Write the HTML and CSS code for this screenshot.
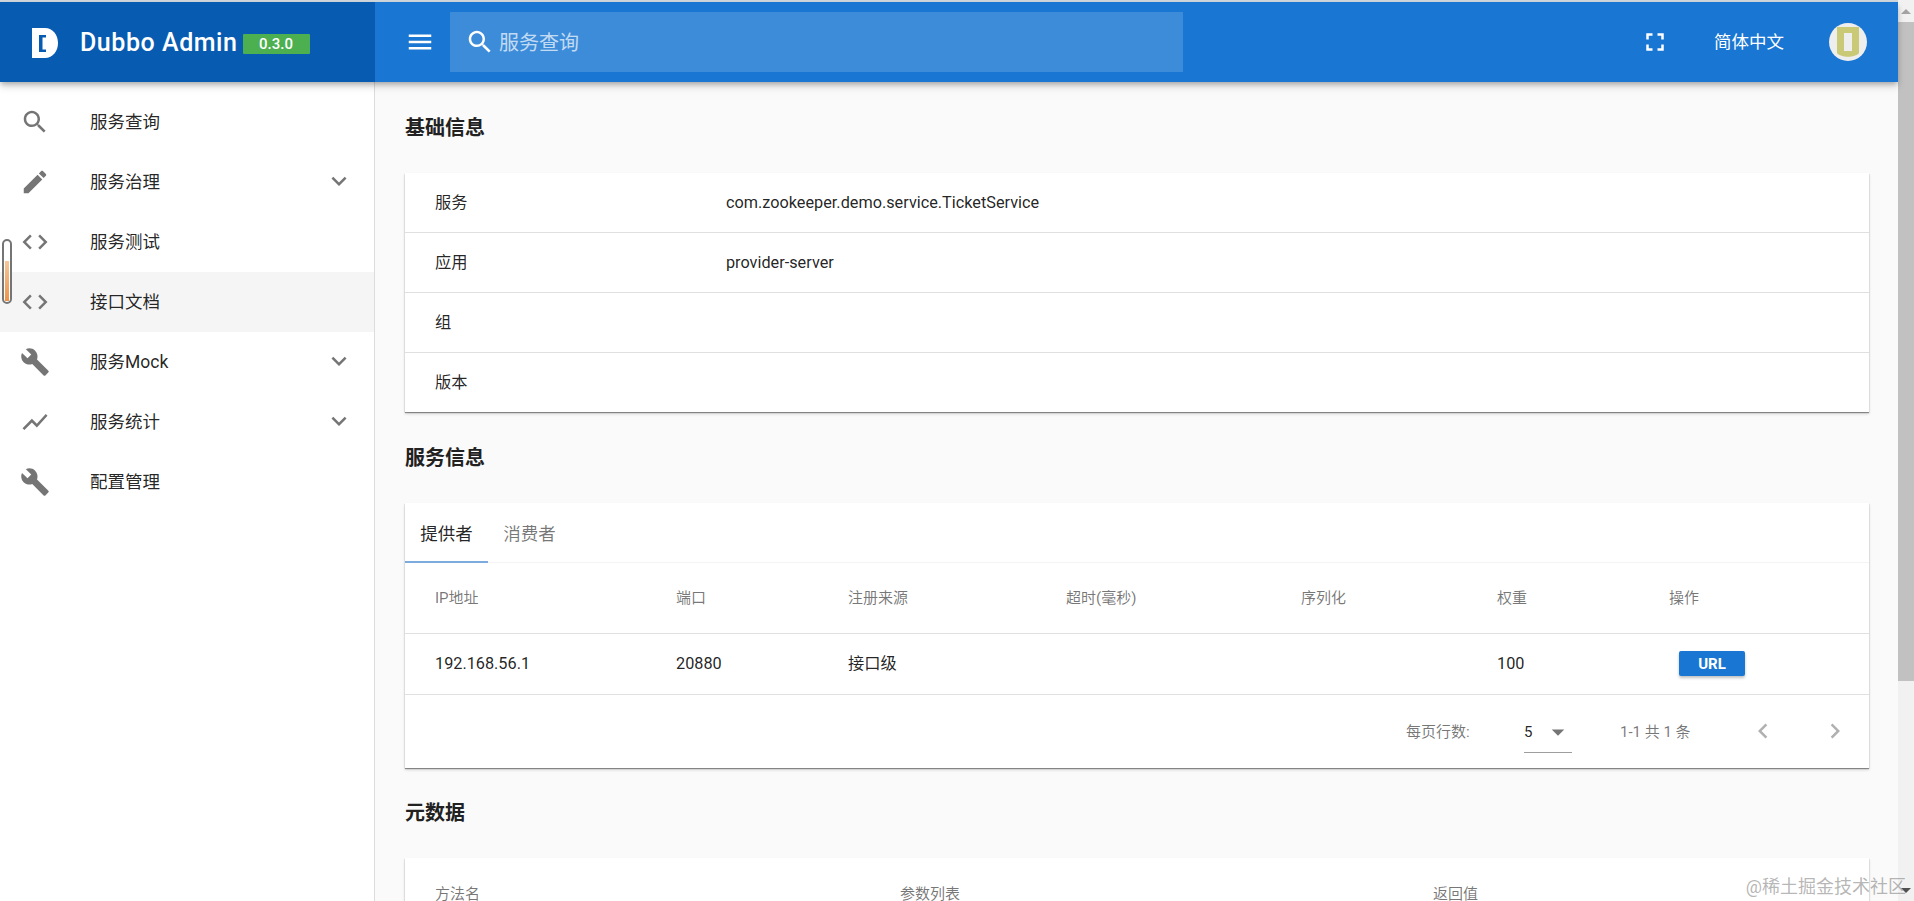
FILE: index.html
```html
<!DOCTYPE html>
<html lang="zh-CN">
<head>
<meta charset="utf-8">
<title>Dubbo Admin</title>
<link rel="stylesheet" href="styles.css">
</head>
<body>
<svg class="defs" width="0" height="0" aria-hidden="true">
  <symbol id="i-search" viewBox="0 0 24 24"><path d="M15.5 14h-.79l-.28-.27C15.41 12.59 16 11.11 16 9.5 16 5.91 13.09 3 9.5 3S3 5.91 3 9.5 5.91 16 9.5 16c1.61 0 3.09-.59 4.23-1.57l.27.28v.79l5 4.99L20.49 19l-4.99-5zm-6 0C7.01 14 5 11.99 5 9.5S7.01 5 9.5 5 14 7.01 14 9.5 11.99 14 9.5 14z"/></symbol>
  <symbol id="i-edit" viewBox="0 0 24 24"><path d="M3 17.25V21h3.75L17.81 9.94l-3.75-3.75L3 17.25zM20.71 7.04c.39-.39.39-1.02 0-1.41l-2.34-2.34c-.39-.39-1.02-.39-1.41 0l-1.83 1.83 3.75 3.75 1.83-1.83z"/></symbol>
  <symbol id="i-code" viewBox="0 0 24 24"><path d="M9.4 16.6L4.8 12l4.6-4.6L8 6l-6 6 6 6 1.4-1.4zm5.2 0l4.6-4.6-4.6-4.6L16 6l6 6-6 6-1.4-1.4z"/></symbol>
  <symbol id="i-build" viewBox="0 0 24 24"><path d="M22.7 19l-9.1-9.1c.9-2.3.4-5-1.5-6.9-2-2-5-2.4-7.4-1.3L9 6 6 9 1.6 4.7C.4 7.1.9 10.1 2.9 12.1c1.9 1.9 4.6 2.4 6.9 1.5l9.1 9.1c.4.4 1 .4 1.4 0l2.3-2.3c.5-.4.5-1.1.1-1.4z"/></symbol>
  <symbol id="i-chart" viewBox="0 0 24 24"><path d="M3.5 18.49l6-6.01 4 4L22 6.92l-1.41-1.41-7.09 7.97-4-4L2 16.99z"/></symbol>
  <symbol id="i-more" viewBox="0 0 24 24"><path d="M16.59 8.59L12 13.17 7.41 8.59 6 10l6 6 6-6z"/></symbol>
  <symbol id="i-menu" viewBox="0 0 24 24"><path d="M3 18h18v-2H3v2zm0-5h18v-2H3v2zm0-7v2h18V6H3z"/></symbol>
  <symbol id="i-full" viewBox="0 0 24 24"><path d="M7 14H5v5h5v-2H7v-3zm-2-4h2V7h3V5H5v5zm12 7h-3v2h5v-5h-2v3zM14 5v2h3v3h2V5h-5z"/></symbol>
  <symbol id="i-left" viewBox="0 0 24 24"><path d="M15.41 7.41L14 6l-6 6 6 6 1.41-1.41L10.83 12z"/></symbol>
  <symbol id="i-right" viewBox="0 0 24 24"><path d="M10 6L8.59 7.41 13.17 12l-4.58 4.59L10 18l6-6z"/></symbol>
  <symbol id="i-drop" viewBox="0 0 24 24"><path d="M7 10l5 5 5-5z"/></symbol>
</svg>

<div class="window">
  <div class="app">
    <header class="topbar">
      <div class="brand">
        <svg class="logo" viewBox="0 0 26 30"><path fill-rule="evenodd" d="M0 0H13C21 0 26 7 26 15S21 30 13 30H0ZM7 7V24H14V21.500H10.500V9.500H14V7Z"/></svg>
        <span class="brand-name">Dubbo Admin</span>
        <span class="badge">0.3.0</span>
      </div>
      <div class="bar">
        <svg class="ico ico-menu"><use href="#i-menu"/></svg>
        <div class="search">
          <svg class="ico ico-search"><use href="#i-search"/></svg>
          <span class="search-text">服务查询</span>
        </div>
        <div class="bar-right">
          <svg class="ico ico-full"><use href="#i-full"/></svg>
          <span class="lang">简体中文</span>
          <svg class="avatar" viewBox="0 0 38 38">
            <circle class="av-bg" cx="19" cy="19" r="19"/>
            <path class="av-fg" d="M8 4H30V30C26 35 12 35 8 30ZM15 10V28H23V10Z"/>
          </svg>
        </div>
      </div>
    </header>

    <div class="body">
      <nav class="side">
        <a class="item"><svg class="ico nav-ico"><use href="#i-search"/></svg><span class="label">服务查询</span></a>
        <a class="item"><svg class="ico nav-ico"><use href="#i-edit"/></svg><span class="label">服务治理</span><svg class="ico chev"><use href="#i-more"/></svg></a>
        <a class="item"><svg class="ico nav-ico"><use href="#i-code"/></svg><span class="label">服务测试</span></a>
        <a class="item active"><svg class="ico nav-ico"><use href="#i-code"/></svg><span class="label">接口文档</span></a>
        <a class="item"><svg class="ico nav-ico"><use href="#i-build"/></svg><span class="label">服务Mock</span><svg class="ico chev"><use href="#i-more"/></svg></a>
        <a class="item"><svg class="ico nav-ico"><use href="#i-chart"/></svg><span class="label">服务统计</span><svg class="ico chev"><use href="#i-more"/></svg></a>
        <a class="item"><svg class="ico nav-ico"><use href="#i-build"/></svg><span class="label">配置管理</span></a>
      </nav>

      <main class="main">
        <h2 class="heading">基础信息</h2>
        <section class="card info">
          <div class="info-row"><span class="info-key">服务</span><span>com.zookeeper.demo.service.TicketService</span></div>
          <div class="info-row"><span class="info-key">应用</span><span>provider-server</span></div>
          <div class="info-row"><span class="info-key">组</span></div>
          <div class="info-row"><span class="info-key">版本</span></div>
        </section>

        <h2 class="heading">服务信息</h2>
        <section class="card">
          <div class="tabs">
            <span class="tab on">提供者</span>
            <span class="tab">消费者</span>
          </div>
          <table class="grid">
            <colgroup><col class="c1"><col class="c2"><col class="c3"><col class="c4"><col class="c5"><col class="c6"><col class="c7"></colgroup>
            <thead>
              <tr><th>IP地址</th><th>端口</th><th>注册来源</th><th>超时(毫秒)</th><th>序列化</th><th>权重</th><th>操作</th></tr>
            </thead>
            <tbody>
              <tr><td>192.168.56.1</td><td>20880</td><td class="td-cjk">接口级</td><td></td><td></td><td>100</td><td><button class="url">URL</button></td></tr>
            </tbody>
          </table>
          <div class="pager">
            <span class="pg-label">每页行数:</span>
            <span class="pg-select"><span>5</span><svg class="ico pg-drop"><use href="#i-drop"/></svg></span>
            <span class="pg-range">1-1 共 1 条</span>
            <svg class="ico pg-nav"><use href="#i-left"/></svg>
            <svg class="ico pg-nav pg-next"><use href="#i-right"/></svg>
          </div>
        </section>

        <h2 class="heading heading-last">元数据</h2>
        <section class="card meta">
          <div class="meta-head"><span class="m1">方法名</span><span class="m2">参数列表</span><span>返回值</span></div>
        </section>
      </main>
    </div>
  </div>

  <div class="scrollbar">
    <span class="sb-btn"><span class="tri-up"></span></span>
    <span class="sb-thumb"></span>
    <span class="sb-btn"><span class="tri-down"></span></span>
  </div>

  <div class="clip"><span class="clip-fill"></span></div>
  <div class="watermark">@稀土掘金技术社区</div>
</div>
</body>
</html>
```

FILE: styles.css
```css
* { box-sizing: border-box; }
html, body { margin: 0; height: 100%; overflow: hidden; }
body {
  font-family: Roboto, "Noto Sans CJK SC", sans-serif;
  font-size: 16.25px;
  color: rgba(0, 0, 0, .87);
  background: #fafafa;
}
.defs { position: absolute; }
.ico { width: 30px; height: 30px; fill: currentColor; flex: none; display: block; }

.window { position: relative; display: flex; height: 901px; }
.app { flex: 1; min-width: 0; display: flex; flex-direction: column; border-top: 2px solid #cfd6dc; }

/* Top bar */
.topbar { height: 80px; flex: none; display: flex; color: #fff; background: #1976d2; box-shadow: 0 3px 5px -1px rgba(0,0,0,.25), 0 5px 8px rgba(0,0,0,.12); position: relative; z-index: 2; }
.brand { width: 375px; flex: none; display: flex; align-items: center; background: #075cb2; padding-left: 32px; }
.logo { width: 26px; height: 30px; fill: #fff; flex: none; margin-top: 1px; }
.brand-name { margin-left: 22px; font-size: 25px; font-weight: 500; letter-spacing: .55px; white-space: nowrap; }
.badge { margin-left: 5px; margin-top: 3px; width: 67px; height: 20px; display: flex; align-items: center; justify-content: center; background: #4caf50; border-radius: 1px; font-size: 15px; font-weight: 500; }
.bar { flex: 1; display: flex; align-items: center; padding-left: 30px; }
.search { margin-left: 15px; width: 733px; height: 60px; display: flex; align-items: center; padding-left: 15px; background: rgba(255,255,255,.16); }
.search-text { margin-left: 4px; font-size: 20px; color: rgba(255,255,255,.7); padding-bottom: 1px; }
.bar-right { margin-left: auto; display: flex; align-items: center; padding-right: 31px; }
.lang { margin-left: 44px; font-size: 17.5px; padding-bottom: 4px; }
.avatar { margin-left: 45px; width: 38px; height: 38px; display: block; flex: none; }
.av-bg { fill: #eeeeee; }
.av-fg { fill: #c9c976; }

/* Layout */
.body { flex: 1; min-height: 0; display: flex; }
.side { width: 375px; flex: none; padding-top: 10px; background: #fff; border-right: 1px solid #dcdcdc; }
.item { height: 60px; display: flex; align-items: center; padding: 0 20px; color: rgba(0,0,0,.87); }
.item.active { background: #f5f5f5; }
.nav-ico { color: #757575; margin-right: 40px; margin-bottom: 1px; }
.label { font-size: 17.5px; padding-bottom: 4px; }
.chev { margin-left: auto; color: #757575; margin-bottom: 3px; }
.main { flex: 1; min-width: 0; padding: 0 29px 0 30px; overflow: hidden; }

.heading { margin: 0; height: 91px; display: flex; align-items: center; padding-bottom: 2px; font-size: 20px; font-weight: 700; color: #212121; }
.heading-last { height: 90px; }
.card { background: #fff; box-shadow: 0 1px 1px rgba(0,0,0,.4), 0 2px 3px rgba(0,0,0,.14); }

.info-row { height: 60px; display: flex; align-items: center; padding-left: 30px; border-bottom: 1px solid #e0e0e0; }
.info-row:last-child { border-bottom: 0; height: 59px; }
.info-key { width: 291px; flex: none; padding-bottom: 4px; }

.tabs { height: 60px; display: flex; border-bottom: 1px solid #f4f4f4; }
.tab { width: 83px; display: flex; align-items: center; justify-content: center; font-size: 17.5px; color: rgba(0,0,0,.54); }
.tab.on { color: rgba(0,0,0,.87); border-bottom: 2.5px solid #7eabde; margin-bottom: -1px; }

.grid { width: 100%; table-layout: fixed; border-collapse: collapse; }
.c1 { width: 241px; } .c2 { width: 172px; } .c3 { width: 218px; } .c4 { width: 235px; } .c5 { width: 196px; } .c6 { width: 172px; }
.grid th, .grid td { padding: 0 0 0 30px; text-align: left; border-bottom: 1px solid #e0e0e0; }
.grid th { height: 70px; padding-bottom: 3px; font-size: 15px; font-weight: 400; color: rgba(0,0,0,.54); }
.grid td { height: 61px; }
.grid .td-cjk { padding-bottom: 3px; }
.url { width: 66px; height: 25px; margin-left: 10px; padding: 0; border: 0; border-radius: 2px; background: #1976d2; color: #fff; font: 700 15px Roboto, sans-serif; box-shadow: 0 2px 3px rgba(0,0,0,.25); display: block; }

.pager { height: 73px; display: flex; align-items: center; padding-left: 1001px; font-size: 15px; color: rgba(0,0,0,.54); }
.pg-label { width: 118px; flex: none; padding-bottom: 2px; }
.pg-select { width: 48px; height: 40px; flex: none; display: flex; align-items: center; justify-content: space-between; border-bottom: 1px solid #9e9e9e; color: rgba(0,0,0,.87); margin-top: 3px; }
.pg-drop { color: #757575; margin-right: -1px; }
.pg-range { margin-left: 48px; width: 128px; flex: none; padding-bottom: 2px; }
.pg-nav { color: #b0b0b0; }
.pg-next { margin-left: 42px; }

.meta-head { height: 70px; display: flex; align-items: center; padding: 0 0 0 30px; font-size: 15px; color: rgba(0,0,0,.54); }
.m1 { width: 465px; flex: none; }
.m2 { width: 533px; flex: none; }

/* Scrollbar */
.scrollbar { width: 16px; flex: none; display: flex; flex-direction: column; background: #f1f1f1; }
.sb-btn { height: 22px; flex: none; display: flex; align-items: center; justify-content: center; }
.sb-thumb { height: 659px; flex: none; background: #c1c1c1; }
.sb-btn:last-child { margin-top: auto; }
.tri-up, .tri-down { width: 0; height: 0; border-left: 5px solid transparent; border-right: 5px solid transparent; }
.tri-up { border-bottom: 5px solid #a3a3a3; }
.tri-down { border-top: 5px solid #505050; }

/* Overlays */
.clip { position: absolute; left: 2px; top: 239px; width: 10px; height: 65px; border: 2px solid #757575; border-radius: 5px; background: #fff; display: flex; align-items: flex-end; padding: 0 1px 1px; z-index: 3; }
.clip-fill { display: block; width: 100%; height: 40px; background: linear-gradient(#f6c79a, #ee9248); }
.watermark { position: absolute; right: 8px; bottom: 3px; font-size: 18px; color: rgba(120,120,120,.55); z-index: 3; white-space: nowrap; }
```
